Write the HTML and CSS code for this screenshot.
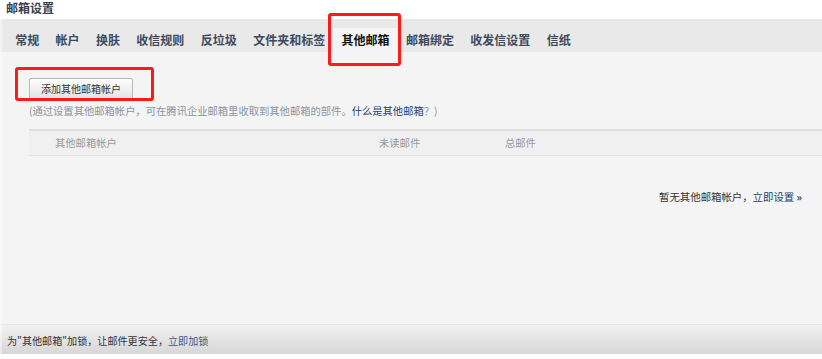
FILE: index.html
```html
<!DOCTYPE html>
<html lang="zh-CN">
<head>
<meta charset="utf-8">
<title>邮箱设置</title>
<link rel="stylesheet" href="styles.css">
</head>
<body>
<div class="page">
  <div class="title">邮箱设置</div>
  <div class="tabs">
    <a class="tab">常规</a>
    <a class="tab">帐户</a>
    <a class="tab">换肤</a>
    <a class="tab">收信规则</a>
    <a class="tab">反垃圾</a>
    <a class="tab">文件夹和标签</a>
    <a class="tab active">其他邮箱</a>
    <a class="tab">邮箱绑定</a>
    <a class="tab">收发信设置</a>
    <a class="tab">信纸</a>
  </div>
  <div class="content">
    <div class="actions"><button class="btn">添加其他邮箱帐户</button></div>
    <p class="hint">(通过设置其他邮箱帐户，可在腾讯企业邮箱里收取到其他邮箱的部件。<a class="hint-link">什么是其他邮箱</a>？)</p>
    <div class="thead">
      <span>其他邮箱帐户</span>
      <span>未读邮件</span>
      <span>总邮件</span>
    </div>
    <div class="empty">暂无其他邮箱帐户，<a class="link">立即设置</a> <span class="raquo">»</span></div>
  </div>
  <div class="footer">为"其他邮箱"加锁，让邮件更安全，<a class="foot-link">立即加锁</a></div>
  <div class="mark mark-tab"></div>
  <div class="mark mark-btn"></div>
</div>
</body>
</html>
```

FILE: styles.css
```css
* { box-sizing: border-box; }
html, body { margin: 0; padding: 0; background: #fff; }
body {
  font-family: "Noto Sans CJK SC", "Microsoft YaHei", sans-serif;
  color: #333;
}
.page {
  position: relative;
  width: 822px;
  height: 359px;
  display: flex;
  flex-direction: column;
}
.title {
  height: 19px;
  line-height: 16px;
  padding-left: 6px;
  font-size: 12px;
  font-weight: bold;
  color: #3a4150;
}
.tabs {
  height: 33px;
  padding: 9px 0 0 5px;
  background: #e9e9e9;
  border-left: 2px solid rgba(255,255,255,0.45);
  display: flex;
}
.tab {
  height: 24px;
  line-height: 24px;
  padding: 0 8.2px;
  font-size: 12px;
  font-weight: bold;
  color: #3d4a5d;
  white-space: nowrap;
}
.tab.active {
  background: #f4f4f4;
  color: #111;
}
.content {
  flex: 0 0 272px;
  background: #f4f4f4;
  border-left: 2px solid rgba(255,255,255,0.45);
  padding-top: 26px;
}
.actions { padding-left: 27px; }
.btn {
  display: block;
  width: 104px;
  height: 21px;
  padding: 0;
  border: 1px solid #b8b8b8;
  border-radius: 2px;
  background: linear-gradient(#fefefe, #e4e4e4);
  font-family: inherit;
  font-size: 10px;
  line-height: 19px;
  color: #333;
}
.hint {
  margin: 5px 0 0 27px;
  line-height: 14px;
  font-size: 10.3px;
  color: #8a93a3;
}
.hint-link { color: #1f3f72; }
.thead {
  margin: 11px 0 0 27px;
  border-top: 2px solid #dedede;
  border-bottom: 1px solid #e4e4e4;
  background: #f0f0f0;
  height: 27px;
  line-height: 23px;
  padding-left: 26px;
  display: grid;
  grid-template-columns: 324px 126px 1fr;
  font-size: 10.3px;
  color: #999;
}
.empty {
  margin-top: 34px;
  padding-right: 20px;
  text-align: right;
  line-height: 14px;
  font-size: 10.4px;
  color: #333;
}
.link { color: #1d3b6b; }
.raquo { color: #1d3b6b; font-weight: bold; }
.footer {
  height: 30px;
  border-top: 1px solid #e6e6e6;
  border-left: 2px solid rgba(255,255,255,0.45);
  background: linear-gradient(#f1f1f1, #d7d7d7);
  padding: 3px 0 0 5px;
  line-height: 26px;
  font-size: 10.1px;
  color: #333;
}
.foot-link { color: #3a5a8a; }
.mark {
  position: absolute;
  border: 3px solid #ff1a1a;
  border-radius: 3px;
}
.mark-tab { left: 328px; top: 13px; width: 73px; height: 53px; }
.mark-btn { left: 15px; top: 67px; width: 139px; height: 34px; }
```
